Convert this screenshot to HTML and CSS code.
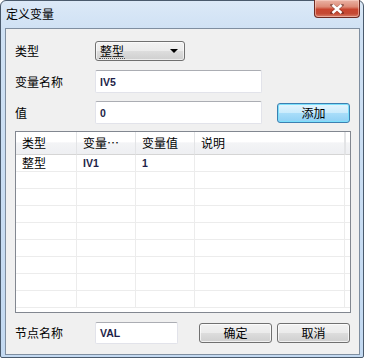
FILE: index.html
```html
<!DOCTYPE html>
<html lang="zh-CN">
<head>
    <meta charset="UTF-8">
    <title>定义变量</title>
    <link rel="stylesheet" href="styles.css">
</head>
<body>
    <div class="window">
        <div class="titlebar">
            <span class="title">定义变量</span>
            <button class="close-btn">
                <svg width="14" height="10" viewBox="0 0 14 10">
                    <path d="M2 1 L12 9 M12 1 L2 9" stroke="#3b1410" stroke-width="3.4" stroke-linecap="square" opacity="0.45"/>
                    <path d="M2.5 1 L11.5 9 M11.5 1 L2.5 9" stroke="#fff" stroke-width="2.4"/>
                </svg>
            </button>
        </div>

        <div class="client">
            <div class="form-row row-type">
                <label class="field-label">类型</label>
                <div class="combo">
                    <span class="combo-text">整型</span>
                    <span class="combo-arrow"></span>
                </div>
            </div>

            <div class="form-row row-name">
                <label class="field-label">变量名称</label>
                <div class="textbox wide">IV5</div>
            </div>

            <div class="form-row row-value">
                <label class="field-label">值</label>
                <div class="textbox wide">0</div>
                <button class="btn btn-default btn-add">添加</button>
            </div>

            <div class="listview">
                <div class="lv-row lv-header">
                    <div class="lv-cell">类型</div>
                    <div class="lv-cell">变量…</div>
                    <div class="lv-cell">变量值</div>
                    <div class="lv-cell">说明</div>
                    <div class="lv-cell lv-filler"></div>
                </div>
                <div class="lv-row">
                    <div class="lv-cell">整型</div>
                    <div class="lv-cell latin">IV1</div>
                    <div class="lv-cell latin">1</div>
                    <div class="lv-cell"></div>
                    <div class="lv-cell lv-filler"></div>
                </div>
                <div class="lv-row"><div class="lv-cell"></div><div class="lv-cell"></div><div class="lv-cell"></div><div class="lv-cell"></div><div class="lv-cell lv-filler"></div></div>
                <div class="lv-row"><div class="lv-cell"></div><div class="lv-cell"></div><div class="lv-cell"></div><div class="lv-cell"></div><div class="lv-cell lv-filler"></div></div>
                <div class="lv-row"><div class="lv-cell"></div><div class="lv-cell"></div><div class="lv-cell"></div><div class="lv-cell"></div><div class="lv-cell lv-filler"></div></div>
                <div class="lv-row"><div class="lv-cell"></div><div class="lv-cell"></div><div class="lv-cell"></div><div class="lv-cell"></div><div class="lv-cell lv-filler"></div></div>
                <div class="lv-row"><div class="lv-cell"></div><div class="lv-cell"></div><div class="lv-cell"></div><div class="lv-cell"></div><div class="lv-cell lv-filler"></div></div>
                <div class="lv-row"><div class="lv-cell"></div><div class="lv-cell"></div><div class="lv-cell"></div><div class="lv-cell"></div><div class="lv-cell lv-filler"></div></div>
                <div class="lv-row"><div class="lv-cell"></div><div class="lv-cell"></div><div class="lv-cell"></div><div class="lv-cell"></div><div class="lv-cell lv-filler"></div></div>
                <div class="lv-row"><div class="lv-cell"></div><div class="lv-cell"></div><div class="lv-cell"></div><div class="lv-cell"></div><div class="lv-cell lv-filler"></div></div>
            </div>

            <div class="form-row row-node">
                <label class="field-label">节点名称</label>
                <div class="textbox short">VAL</div>
                <button class="btn btn-ok">确定</button>
                <button class="btn btn-cancel">取消</button>
            </div>
        </div>
    </div>
</body>
</html>
```

FILE: styles.css
```css
* {
    margin: 0;
    padding: 0;
    box-sizing: border-box;
}

body {
    background: #fff;
    font-family: "Noto Sans CJK SC", "DejaVu Sans", sans-serif;
    font-size: 12px;
    color: #000;
}

.window {
    width: 364px;
    height: 358px;
    border: 1px solid #4a5a6c;
    border-radius: 6px 6px 2px 2px;
    background: linear-gradient(180deg, #dce9f7 0%, #cfe1f4 8%, #c3d9f1 100%);
    padding: 0 3px 2px 4px;
    display: flex;
    flex-direction: column;
}

.titlebar {
    height: 27px;
    display: flex;
    align-items: flex-start;
}

.title {
    padding: 5px 0 0 1px;
    font-size: 12px;
    line-height: 16px;
    color: #000;
}

.close-btn {
    margin-left: auto;
    margin-top: -1px;
    width: 46px;
    height: 18px;
    border: 1px solid #6d2a22;
    border-top: none;
    border-radius: 0 0 4px 4px;
    background: linear-gradient(180deg, #eab3a5 0%, #dd8a76 40%, #c8452f 55%, #c54a34 80%, #d8806c 100%);
    display: flex;
    align-items: center;
    justify-content: center;
    box-shadow: inset 0 0 0 1px rgba(255, 220, 210, 0.5);
}

.client {
    flex: 1;
    border: 1px solid #7f8ea0;
    background: #f0f0f0;
    padding: 0 0 0 9px;
    display: flex;
    flex-direction: column;
}

.form-row {
    display: flex;
    align-items: center;
}

.row-type {
    margin-top: 12px;
    height: 20px;
}

.row-name {
    margin-top: 9px;
    height: 23px;
}

.row-value {
    margin-top: 8px;
    height: 23px;
}

.row-node {
    margin-top: 9px;
    height: 22px;
}

.field-label {
    width: 80px;
    flex-shrink: 0;
    font-size: 12px;
    line-height: 14px;
}

.combo {
    width: 90px;
    height: 20px;
    border: 1px solid #707070;
    border-radius: 3px;
    background: linear-gradient(180deg, #f2f2f2 0%, #ebebeb 50%, #dddddd 51%, #cfcfcf 100%);
    display: flex;
    align-items: center;
    padding: 0 6px 0 3px;
    box-shadow: inset 0 0 0 1px rgba(255, 255, 255, 0.6);
}

.combo-text {
    padding: 0 1px;
    line-height: 14px;
    border-bottom: 1px dotted #555;
}

.combo-arrow {
    margin-left: auto;
    width: 0;
    height: 0;
    border-left: 4px solid transparent;
    border-right: 4px solid transparent;
    border-top: 4px solid #000;
}

.textbox {
    height: 100%;
    background: #fff;
    border: 1px solid #e2e3ea;
    border-top-color: #abadb3;
    border-radius: 2px;
    padding: 0 4px;
    display: flex;
    align-items: center;
    font-family: "Liberation Sans", "DejaVu Sans", sans-serif;
    font-size: 10.5px;
    font-weight: bold;
    color: #1e1e48;
}

.textbox.wide {
    width: 167px;
}

.textbox.short {
    width: 83px;
}

.btn {
    width: 73px;
    height: 20px;
    border: 1px solid #707070;
    border-radius: 3px;
    background: linear-gradient(180deg, #f2f2f2 0%, #ebebeb 50%, #dddddd 51%, #cfcfcf 100%);
    box-shadow: inset 0 0 0 1px rgba(255, 255, 255, 0.7);
    font-family: "Noto Sans CJK SC", sans-serif;
    font-size: 12px;
    line-height: 14px;
    color: #000;
}

.btn-default {
    border-color: #3c7fb1;
    background: linear-gradient(180deg, #e5f5fd 0%, #c9ebfc 50%, #a9ddf9 51%, #8fd1f5 100%);
    box-shadow: inset 0 0 0 1px #7ce0fb;
}

.btn-add {
    margin-left: 15px;
}

.btn-ok {
    margin-left: 21px;
}

.btn-cancel {
    margin-left: 5px;
}

.listview {
    margin-top: 7px;
    width: 336px;
    height: 182px;
    border: 1px solid #828790;
    background: #fff;
    overflow: hidden;
}

.lv-row {
    display: grid;
    grid-template-columns: 61px 59px 59px 150px 1fr;
    height: 17px;
}

.lv-cell {
    border-right: 1px solid #ececec;
    border-bottom: 1px solid #ececec;
    padding-left: 6px;
    line-height: 16px;
    font-size: 12px;
    white-space: nowrap;
    overflow: hidden;
}

.lv-cell.lv-filler {
    border-right: none;
}

.lv-cell.latin {
    font-family: "Liberation Sans", "DejaVu Sans", sans-serif;
    font-size: 10.5px;
    font-weight: bold;
    color: #1e1e48;
}

.lv-header {
    height: 23px;
    background: linear-gradient(180deg, #ffffff 0%, #ffffff 45%, #f3f4f6 46%, #eeeff2 100%);
}

.lv-header .lv-cell {
    border-right-color: #e3e4e6;
    border-bottom: 1px solid #d5d5d5;
    line-height: 22px;
}

.lv-header .lv-filler {
    border-left: 1px solid #e3e4e6;
}
```
